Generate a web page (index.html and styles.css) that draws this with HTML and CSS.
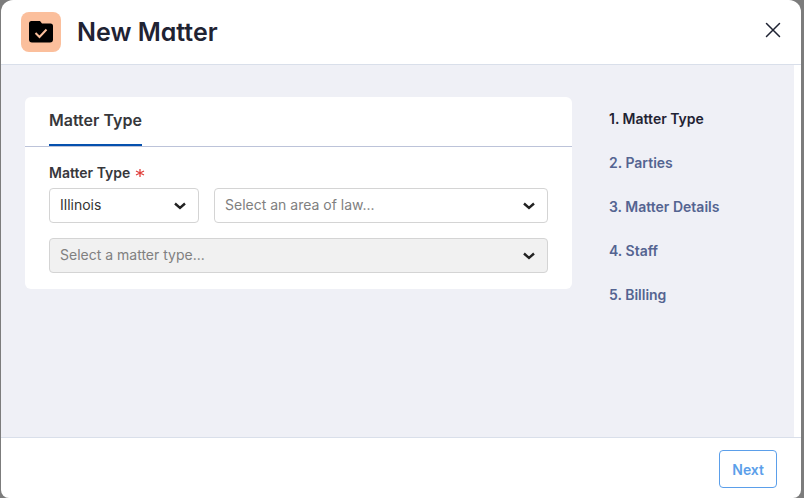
FILE: index.html
```html
<!DOCTYPE html>
<html lang="en">
<head>
  <meta charset="UTF-8" />
  <meta name="viewport" content="width=device-width, initial-scale=1.0"/>
  <title>New Matter</title>
  <link rel="stylesheet" href="styles.css">
</head>
<body>
  <div class="modal" role="dialog" aria-labelledby="modal-title">
    <header class="modal-header">
      <span class="header-icon">
        <svg width="24" height="22" viewBox="0 0 24 22">
          <path d="M2.500 0h8.500l2 2.500h8.500A2.500 2.500 0 0 1 24 5v13.500a3 3 0 0 1-3 3H3a3 3 0 0 1-3-3v-16A2.500 2.500 0 0 1 2.500 0z" fill="#000"/>
          <path d="M6.500 12l4 4L17.500 8.500" fill="none" stroke="#fbbf9c" stroke-width="2"/>
        </svg>
      </span>
      <h1 class="modal-title" id="modal-title">New Matter</h1>
      <button class="close-btn" type="button" aria-label="Close">
        <svg width="16" height="16" viewBox="0 0 16 16">
          <path d="M1.500 1.500l13 13M14.500 1.500l-13 13" fill="none" stroke="#1f2333" stroke-width="1.500" stroke-linecap="round"/>
        </svg>
      </button>
    </header>

    <main class="modal-body">
      <section class="card">
        <div class="card-header">
          <h2 class="card-tab">Matter Type</h2>
        </div>
        <form class="card-form">
          <label class="field-label" for="state">Matter Type
            <svg class="required" width="10" height="10" viewBox="0 0 10 10">
              <path d="M5 1v8M1 3l8 4M9 3l-8 4" stroke="#e0403c" stroke-width="1.300" fill="none"/>
            </svg>
          </label>
          <div class="field-grid">
            <div class="select-wrapper">
              <select id="state">
                <option selected>Illinois</option>
              </select>
              <svg class="chevron" width="12" height="8" viewBox="0 0 12 8"><path d="M1 1.500l5 4.500 5-4.500"/></svg>
            </div>
            <div class="select-wrapper">
              <select class="placeholder" id="area" aria-label="Area of law">
                <option selected>Select an area of law...</option>
              </select>
              <svg class="chevron" width="12" height="8" viewBox="0 0 12 8"><path d="M1 1.500l5 4.500 5-4.500"/></svg>
            </div>
            <div class="select-wrapper wide">
              <select class="placeholder" id="matter-type" aria-label="Matter type" disabled>
                <option selected>Select a matter type...</option>
              </select>
              <svg class="chevron" width="12" height="8" viewBox="0 0 12 8"><path d="M1 1.500l5 4.500 5-4.500"/></svg>
            </div>
          </div>
        </form>
      </section>

      <nav class="steps">
        <a class="active" href="#matter-type">1. Matter Type</a>
        <a href="#parties">2. Parties</a>
        <a href="#details">3. Matter Details</a>
        <a href="#staff">4. Staff</a>
        <a href="#billing">5. Billing</a>
      </nav>
    </main>

    <footer class="modal-footer">
      <button class="next-btn" type="button">Next</button>
    </footer>
  </div>
</body>
</html>
```
FILE: styles.css
```css
* {
  box-sizing: border-box;
}

body {
  font-family: Inter, "Liberation Sans", sans-serif;
  font-size: 14px;
  margin: 0;
  background: #7c7c7c;
}

.modal {
  display: flex;
  flex-direction: column;
  height: 100vh;
  margin: 0 3px 0 1px;
  background: white;
  border-radius: 12px 12px 8px 8px;
  overflow: hidden;
}

.modal-header {
  display: flex;
  align-items: center;
  gap: 16px;
  height: 65px;
  padding: 0 20px;
  border-bottom: 1px solid #d9dfea;
}

.header-icon {
  display: flex;
  align-items: center;
  justify-content: center;
  width: 40px;
  height: 40px;
  background: #fbbf9c;
  border-radius: 8px;
}

.modal-title {
  flex: 1;
  margin: 0;
  font-size: 25px;
  font-weight: 600;
  line-height: 32px;
  font-feature-settings: "cv11";
  color: #1f2333;
}

.close-btn {
  display: flex;
  padding: 0 0 4px;
  border: none;
  background: none;
  cursor: pointer;
}

.modal-body {
  flex: 1;
  display: grid;
  grid-template-columns: 1fr 148px;
  align-items: start;
  gap: 37px;
  margin-right: 7px;
  padding: 32px 37px 32px 24px;
  background: #eff0f6;
  overflow: auto;
}

.card {
  background: white;
  border-radius: 6px;
}

.card-header {
  display: flex;
  height: 50px;
  padding: 0 24px;
  border-bottom: 1px solid #bcc3d9;
}

.card-tab {
  margin: 0;
  border-bottom: 2px solid #0550ae;
  font-size: 16px;
  font-weight: 600;
  line-height: 47px;
  color: #37373b;
}

.card-form {
  padding: 16px 24px;
}

.field-label {
  display: flex;
  align-items: center;
  gap: 5px;
  margin-bottom: 5px;
  font-weight: 600;
  line-height: 20px;
  color: #37373b;
}

.field-grid {
  display: grid;
  grid-template-columns: 150px 1fr;
  gap: 15px;
}

.select-wrapper {
  position: relative;
}

.wide {
  grid-column: 1 / -1;
}

select {
  appearance: none;
  display: block;
  width: 100%;
  height: 35px;
  padding: 0 32px 2px 10px;
  border: 1px solid #d4d4d4;
  border-radius: 4px;
  background: white;
  font-family: inherit;
  font-size: 14px;
  color: #333;
}

select.placeholder {
  color: #808080;
}

select:disabled {
  background: #f1f1f1;
  opacity: 1;
}

.chevron {
  position: absolute;
  top: 14px;
  right: 13px;
  fill: none;
  stroke: #222;
  stroke-width: 2.4;
  pointer-events: none;
}

.steps {
  display: flex;
  flex-direction: column;
  gap: 24px;
  padding-top: 12px;
}

.steps a {
  font-weight: 600;
  line-height: 20px;
  color: #546491;
  text-decoration: none;
}

.steps a.active {
  color: #1f2333;
}

.modal-footer {
  display: flex;
  justify-content: flex-end;
  padding: 12px 24px 10px;
  border-top: 1px solid #d9dfea;
}

.next-btn {
  height: 38px;
  padding: 0 12px;
  border: 1px solid #5b9fea;
  border-radius: 4px;
  background: white;
  font-family: inherit;
  font-size: 14px;
  font-weight: 600;
  color: #5b9fea;
  cursor: pointer;
}
```
